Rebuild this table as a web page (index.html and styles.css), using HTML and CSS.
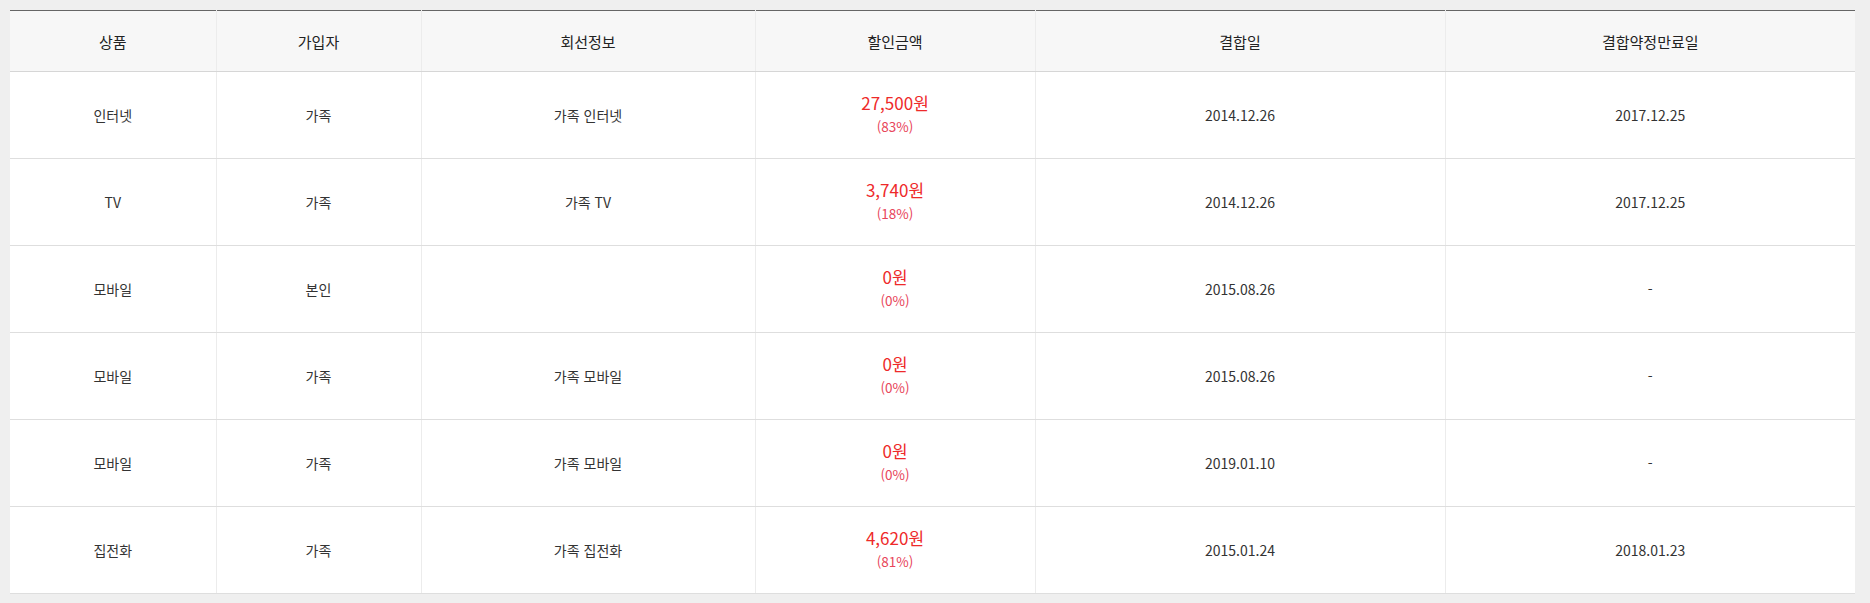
FILE: index.html
```html
<!DOCTYPE html>
<html lang="ko">
<head>
<meta charset="utf-8">
<title>결합 할인 내역</title>
<link rel="stylesheet" href="styles.css">
</head>
<body>
<div class="wrap">
<table class="tbl">
  <colgroup>
    <col class="c1"><col class="c2"><col class="c3"><col class="c4"><col class="c5"><col class="c6">
  </colgroup>
  <thead>
    <tr><th>상품</th><th>가입자</th><th>회선정보</th><th>할인금액</th><th>결합일</th><th>결합약정만료일</th></tr>
  </thead>
  <tbody>
    <tr><td>인터넷</td><td>가족</td><td>가족 인터넷</td><td><div class="amt">27,500원</div><div class="pct">(83%)</div></td><td>2014.12.26</td><td>2017.12.25</td></tr>
    <tr><td>TV</td><td>가족</td><td>가족 TV</td><td><div class="amt">3,740원</div><div class="pct">(18%)</div></td><td>2014.12.26</td><td>2017.12.25</td></tr>
    <tr><td>모바일</td><td>본인</td><td></td><td><div class="amt">0원</div><div class="pct">(0%)</div></td><td>2015.08.26</td><td>-</td></tr>
    <tr><td>모바일</td><td>가족</td><td>가족 모바일</td><td><div class="amt">0원</div><div class="pct">(0%)</div></td><td>2015.08.26</td><td>-</td></tr>
    <tr><td>모바일</td><td>가족</td><td>가족 모바일</td><td><div class="amt">0원</div><div class="pct">(0%)</div></td><td>2019.01.10</td><td>-</td></tr>
    <tr><td>집전화</td><td>가족</td><td>가족 집전화</td><td><div class="amt">4,620원</div><div class="pct">(81%)</div></td><td>2015.01.24</td><td>2018.01.23</td></tr>
  </tbody>
</table>
</div>
</body>
</html>
```
FILE: styles.css
```css
html, body {
  margin: 0;
  padding: 0;
  background: #efefef;
}
body {
  font-family: "Noto Sans CJK KR", "Noto Sans", "Liberation Sans", sans-serif;
  color: #333;
}
.wrap {
  padding: 10px 15px 10px 10px;
}
.tbl {
  width: 1845px;
  border-collapse: collapse;
  table-layout: fixed;
  background: #fff;
  border-top: 1px solid #666;
}
.c1 { width: 206px; }
.c2 { width: 205px; }
.c3 { width: 334px; }
.c4 { width: 280px; }
.c5 { width: 410px; }
.c6 { width: 410px; }
.tbl th {
  height: 60px;
  padding: 0;
  background: #f7f7f7;
  font-size: 15px;
  font-weight: normal;
  color: #222;
  text-align: center;
  vertical-align: middle;
  border-bottom: 1px solid #d6d6d6;
  border-left: 1px solid #ececec;
}
.tbl td {
  height: 86px;
  padding: 0;
  font-size: 14px;
  line-height: 20px;
  color: #333;
  text-align: center;
  vertical-align: middle;
  border-bottom: 1px solid #dedede;
  border-left: 1px solid #ececec;
}
.tbl th:first-child, .tbl td:first-child {
  border-left: none;
}
.amt {
  font-size: 17px;
  line-height: 22px;
  color: #ee2a2a;
}
.pct {
  font-size: 13.5px;
  line-height: 24px;
  color: #e8455a;
}
```
